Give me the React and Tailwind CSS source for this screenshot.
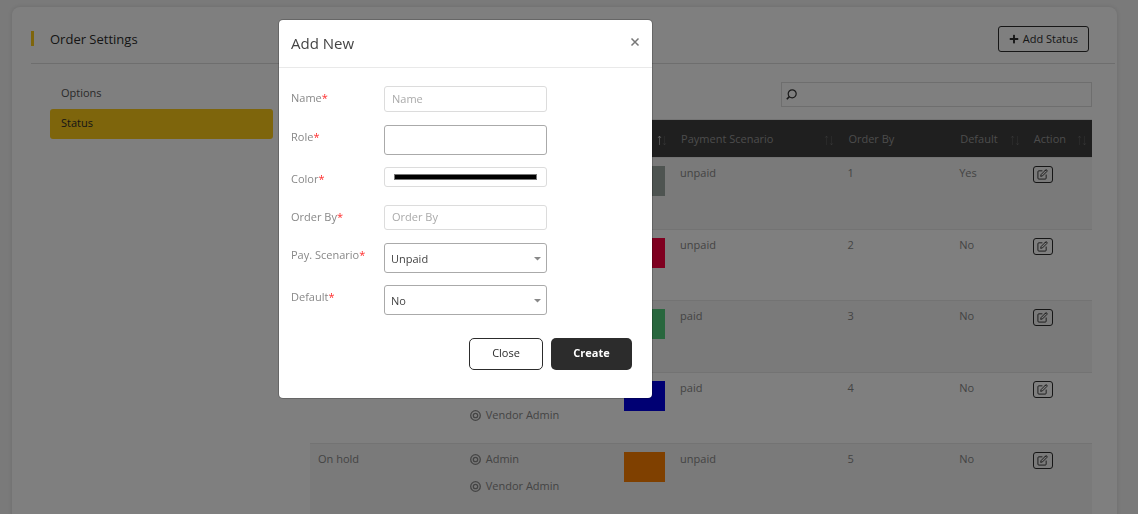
import { useState } from 'react'
import { FiEdit } from 'react-icons/fi'
import { FaPlus } from 'react-icons/fa'

const statuses = [
  { id: 1, name: 'Pending', roles: ['Admin', 'Vendor Admin'], color: '#9da8a2', scenario: 'unpaid', orderBy: 1, isDefault: 'Yes' },
  { id: 2, name: 'Cancelled', roles: ['Admin', 'Vendor Admin'], color: '#ff0040', scenario: 'unpaid', orderBy: 2, isDefault: 'No' },
  { id: 3, name: 'Completed', roles: ['Admin', 'Vendor Admin'], color: '#53cf7c', scenario: 'paid', orderBy: 3, isDefault: 'No' },
  { id: 4, name: 'Processing', roles: ['Admin', 'Vendor Admin'], color: '#0000e6', scenario: 'paid', orderBy: 4, isDefault: 'No' },
  { id: 5, name: 'On hold', roles: ['Admin', 'Vendor Admin'], color: '#ff8000', scenario: 'unpaid', orderBy: 5, isDefault: 'No' },
]

const columns = [
  { title: 'Name', width: 'w-[19.4%]', sort: true },
  { title: 'Role', width: 'w-[19.7%]', sort: false },
  { title: '', width: 'w-[7.2%]', sort: true, active: true },
  { title: 'Payment Scenario', width: 'w-[21.4%]', sort: true },
  { title: 'Order By', width: 'w-[14.3%]', sort: false },
  { title: 'Default', width: 'w-[9.4%]', sort: true },
  { title: 'Action', width: 'w-[8.6%]', sort: true },
]

const SortArrows = ({ active }) => (
  <svg width="10" height="11" viewBox="0 0 10 11" fill="none" stroke="#fff" className="mt-1" aria-hidden="true">
    <path d="M2.5 10V1M1 3L2.5 1L4 3" strokeOpacity={active ? 0.5 : 0.11} />
    <path d="M7.5 1V10M6 8L7.5 10L9 8" strokeOpacity="0.11" />
  </svg>
)

const TargetIcon = () => (
  <svg width="11" height="11" viewBox="0 0 11 11" fill="none" stroke="currentColor" strokeWidth="1.3" aria-hidden="true">
    <circle cx="5.5" cy="5.5" r="4.8" />
    <circle cx="5.5" cy="5.5" r="2.2" />
  </svg>
)

const StatusTable = () => {
  return (
    <table className="w-full table-fixed border-t border-[#e8e8e8] text-left">
      <thead className="bg-[#3e3e3e] text-[#999]">
        <tr className="h-[38px]">
          {columns.map((col, index) => (
            <th key={index} scope="col" className={`${col.width} pl-[9px] pr-[5px] font-medium`}>
              <div className="flex items-center justify-between whitespace-nowrap">
                <span>{col.title}</span>
                {col.sort && <SortArrows active={col.active} />}
              </div>
            </th>
          ))}
        </tr>
      </thead>
      <tbody>
        {statuses.map((item) => (
          <tr key={item.id} className="h-[71px] border-t border-[#e6e6e6] align-top odd:h-[72px] odd:bg-[#f4f4f4]">
            <td className="px-2 pt-[7px]">{item.name}</td>
            <td className="px-2 pt-[7px]">
              <ul className="flex flex-col gap-[11px]">
                {item.roles.map((role) => (
                  <li key={role} className="flex items-center gap-[5px]">
                    <TargetIcon />
                    {role}
                  </li>
                ))}
              </ul>
            </td>
            <td className="px-2 pt-2">
              <div className="h-[30px] w-[41px]" style={{ backgroundColor: item.color }} />
            </td>
            <td className="px-2 pt-[7px]">{item.scenario}</td>
            <td className="px-2 pt-[7px]">{item.orderBy}</td>
            <td className="px-2 pt-[7px]">{item.isDefault}</td>
            <td className="px-2 pt-2">
              <button type="button" aria-label={`Edit ${item.name}`} className="flex h-[17px] w-5 items-center justify-center rounded-[3px] border border-[#2c2c2c] text-[#2c2c2c]">
                <FiEdit size={11} />
              </button>
            </td>
          </tr>
        ))}
      </tbody>
    </table>
  )
}

const FormRow = ({ id, label, children }) => (
  <div className="flex min-h-[26px] items-start">
    <label htmlFor={id} className="w-[93px] shrink-0 leading-6">
      {label}
      <span className="text-[#ff2d2d]">*</span>
    </label>
    <div className="relative w-[163px]">{children}</div>
  </div>
)

const SelectBox = ({ id, options }) => (
  <>
    <select id={id} className="block h-[30px] w-full appearance-none rounded-[3px] border border-[#aaa] bg-white px-1.5 pt-0.5 text-[#444]">
      {options.map((option) => (
        <option key={option}>{option}</option>
      ))}
    </select>
    <svg className="pointer-events-none absolute right-1.5 top-3.5" width="7" height="4" viewBox="0 0 7 4" aria-hidden="true">
      <path d="M0 0H7L3.5 3.5Z" fill="#888" />
    </svg>
  </>
)

const AddStatusModal = ({ onClose }) => {
  const [color, setColor] = useState('#000000')

  return (
    <div className="fixed inset-0 bg-black/50 pl-[278px] pt-[19px]">
      <div role="dialog" aria-labelledby="modal-title" className="w-[375px] rounded-[5px] border border-black/20 bg-white bg-clip-padding">
        <div className="flex h-12 items-center justify-between border-b border-[#e9e9e9] px-3">
          <h5 id="modal-title" className="pb-0.5 text-[15px] text-[#444]">Add New</h5>
          <button type="button" aria-label="Close dialog" onClick={onClose} className="pb-1 text-[#777]">
            <svg width="10" height="10" viewBox="0 0 10 10" stroke="currentColor" strokeWidth="1.5" aria-hidden="true">
              <path d="M1.5 1.5L8.5 8.5M8.5 1.5L1.5 8.5" />
            </svg>
          </button>
        </div>
        <form className="px-3 pb-7 pt-[18px]" onSubmit={(e) => e.preventDefault()}>
          <div className="flex flex-col gap-3">
            <FormRow id="name" label="Name">
              <input id="name" type="text" placeholder="Name" className="mb-px block h-[26px] w-full rounded-[3px] border border-[#dcdcdc] px-[7px] pb-0.5 placeholder:text-[#aaa]" />
            </FormRow>
            <FormRow id="role" label="Role">
              <input id="role" type="text" className="block h-[30px] w-full rounded-[3px] border border-[#aaa] px-[7px]" />
            </FormRow>
            <FormRow id="color" label="Color">
              <input id="color" type="color" value={color} onChange={(e) => setColor(e.target.value)} className="block h-5 w-full rounded-[3px] border border-[#dcdcdc] px-[7px] py-0.5" />
            </FormRow>
            <FormRow id="order" label="Order By">
              <input id="order" type="text" placeholder="Order By" className="block h-[25px] w-full rounded-[3px] border border-[#dcdcdc] px-[7px] pb-0.5 placeholder:text-[#aaa]" />
            </FormRow>
            <FormRow id="scenario" label="Pay. Scenario">
              <SelectBox id="scenario" options={['Unpaid', 'Paid']} />
            </FormRow>
            <FormRow id="default" label="Default">
              <SelectBox id="default" options={['No', 'Yes']} />
            </FormRow>
          </div>
          <div className="mt-[23px] flex justify-end gap-2 pr-2">
            <button type="button" onClick={onClose} className="h-8 w-[74px] rounded-[5px] border border-[#2c2c2c] pb-0.5 font-medium text-[#2c2c2c]">
              Close
            </button>
            <button type="submit" className="h-8 w-[81px] rounded-[5px] bg-[#2c2c2c] pb-0.5 font-bold text-white">
              Create
            </button>
          </div>
        </form>
      </div>
    </div>
  )
}

const App = () => {
  const [openModal, setOpenModal] = useState(true)

  return (
    <div className="h-screen overflow-hidden bg-[#f4f4f4] pl-3 pr-[21px] pt-[7px] font-['Open_Sans',sans-serif] text-[11px] leading-4 text-[#888]">
      <div className="min-h-screen rounded-lg bg-white shadow-[0_0_4px_rgba(0,0,0,0.12)]">
        <div className="ml-[19px] mr-0.5 flex h-[57px] items-center justify-between border-b border-[#dcdcdc] pr-[26px] pt-[7px]">
          <h1 className="flex items-center gap-4 text-[13px] text-[#2c2c2c]">
            <span className="h-[15px] w-[3px] bg-[#fcca19]" />
            Order Settings
          </h1>
          <button type="button" onClick={() => setOpenModal(true)} className="flex h-[26px] items-center gap-1 rounded-[3px] border border-[#2c2c2c] px-2.5 text-[#2c2c2c]">
            <FaPlus size={10} />
            Add Status
          </button>
        </div>
        <div className="flex gap-[37px] pl-[38px] pr-[25px] pt-[18px]">
          <nav className="w-[223px] shrink-0">
            <a href="#options" className="block px-[11px] py-[3px] text-[#555]">Options</a>
            <a href="#status" className="mt-[5px] block rounded-[3px] bg-[#fcca19] px-[11px] pb-2 pt-1.5 text-[#2c2c2c]">Status</a>
          </nav>
          <div className="min-w-0 flex-1">
            <label className="mb-3 ml-auto flex h-[25px] w-[311px] items-center gap-1.5 border border-[#dcdcdc] px-1">
              <svg width="11" height="11" viewBox="0 0 11 11" fill="none" stroke="#333" strokeWidth="1.2" aria-hidden="true">
                <circle cx="6.2" cy="4.8" r="4" />
                <path d="M3.4 7.6L0.8 10.2" strokeWidth="1.6" />
              </svg>
              <input type="search" aria-label="Search statuses" className="min-w-0 flex-1 outline-none" />
            </label>
            <StatusTable />
          </div>
        </div>
      </div>
      {openModal && <AddStatusModal onClose={() => setOpenModal(false)} />}
    </div>
  )
}

export default App
